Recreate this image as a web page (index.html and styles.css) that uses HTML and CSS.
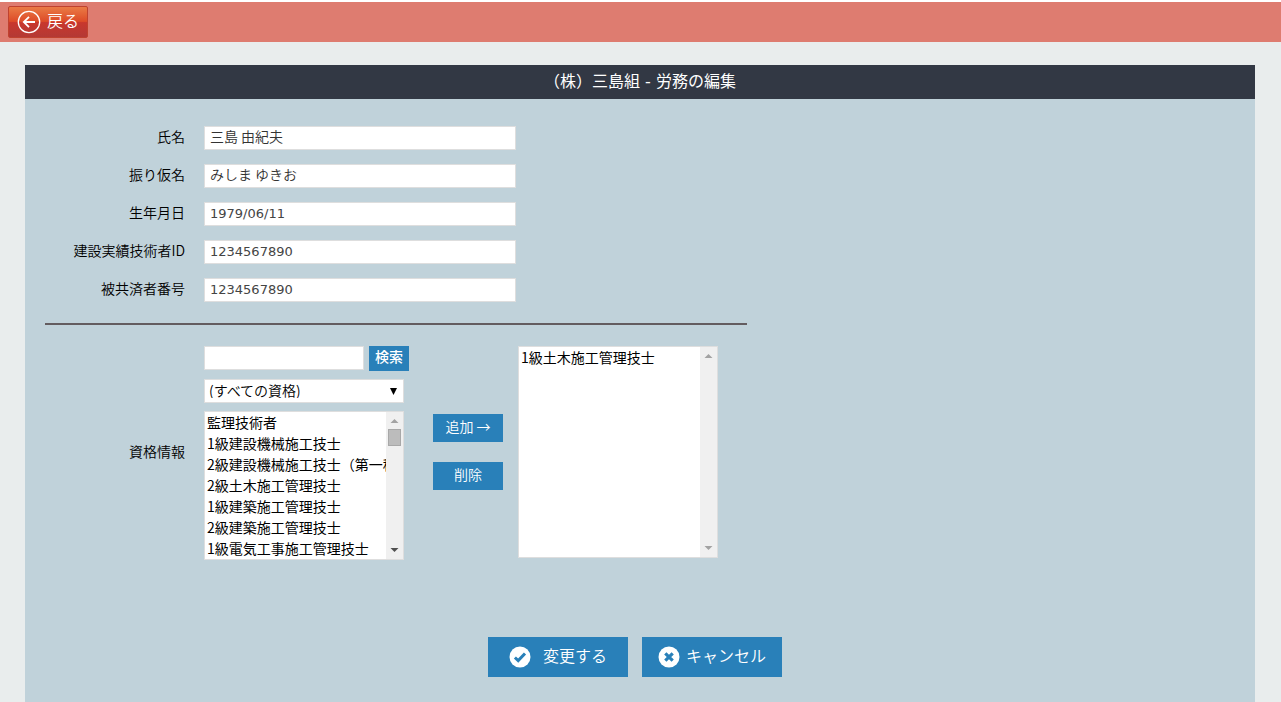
FILE: index.html
```html
<!DOCTYPE html>
<html lang="ja">
<head>
<meta charset="utf-8">
<meta name="viewport" content="width=device-width, initial-scale=1">
<title>労務の編集</title>
<link rel="stylesheet" href="styles.css">
</head>
<body>
<header class="topbar">
  <button type="button" class="back">
    <svg class="back-icon" viewBox="0 0 24 24" aria-hidden="true"><circle cx="12" cy="12" r="10.7" fill="none" stroke="#fff" stroke-width="1.3"/><path d="M18 12H7.500M12 6.800L6.800 12l5.200 5.200" fill="none" stroke="#fff" stroke-width="1.8"/></svg>
    <span>戻る</span>
  </button>
</header>
<main class="page">
  <h1 class="title">（株）三島組 - 労務の編集</h1>
  <form class="panel">
    <div class="fields">
      <div class="row"><label class="label" for="name">氏名</label><input class="box text" id="name" type="text" value="三島 由紀夫"></div>
      <div class="row"><label class="label" for="kana">振り仮名</label><input class="box text" id="kana" type="text" value="みしま ゆきお"></div>
      <div class="row"><label class="label" for="birth">生年月日</label><input class="box text number" id="birth" type="text" value="1979/06/11"></div>
      <div class="row"><label class="label" for="engineer">建設実績技術者ID</label><input class="box text number" id="engineer" type="text" value="1234567890"></div>
      <div class="row"><label class="label" for="mutual">被共済者番号</label><input class="box text number" id="mutual" type="text" value="1234567890"></div>
    </div>
    <hr class="rule">
    <div class="row license">
      <label class="label" for="available">資格情報</label>
      <div class="finder">
        <div class="search">
          <input class="box search-text" type="text" aria-label="資格の検索">
          <button type="button" class="btn search-btn">検索</button>
        </div>
        <select class="box category" aria-label="資格の種類"><option>(すべての資格)</option></select>
        <div class="list available">
          <select class="options" id="available" size="7">
            <option>監理技術者</option>
            <option>1級建設機械施工技士</option>
            <option>2級建設機械施工技士（第一種）</option>
            <option>2級土木施工管理技士</option>
            <option>1級建築施工管理技士</option>
            <option>2級建築施工管理技士</option>
            <option>1級電気工事施工管理技士</option>
            <option>2級電気工事施工管理技士</option>
            <option>1級管工事施工管理技士</option>
            <option>2級管工事施工管理技士</option>
            <option>1級造園施工管理技士</option>
            <option>2級造園施工管理技士</option>
          </select>
          <div class="scrollbar" aria-hidden="true">
            <svg class="arrow" viewBox="0 0 17 17"><path fill="#a3a3a3" d="M4.500 11h8l-4-4z"/></svg>
            <div class="thumb"></div>
            <svg class="arrow down" viewBox="0 0 17 17"><path fill="#505050" d="M4.500 6h8l-4 4z"/></svg>
          </div>
        </div>
      </div>
      <div class="transfer">
        <button type="button" class="btn move">追加 →</button>
        <button type="button" class="btn move">削除</button>
      </div>
      <div class="list chosen">
        <select class="options" size="10" aria-label="追加した資格"><option>1級土木施工管理技士</option></select>
        <div class="scrollbar" aria-hidden="true">
          <svg class="arrow" viewBox="0 0 17 17"><path fill="#a3a3a3" d="M4.500 11h8l-4-4z"/></svg>
          <svg class="arrow down" viewBox="0 0 17 17"><path fill="#a3a3a3" d="M4.500 6h8l-4 4z"/></svg>
        </div>
      </div>
    </div>
    <div class="actions">
      <button type="submit" class="btn action submit">
        <svg class="action-icon" viewBox="0 0 22 22" aria-hidden="true"><circle cx="11" cy="11" r="10.500" fill="#fff"/><path d="M5.900 11.500l3.300 3.100L16 7.500" fill="none" stroke="#2980b9" stroke-width="3"/></svg>
        <span>変更する</span>
      </button>
      <button type="button" class="btn action">
        <svg class="action-icon" viewBox="0 0 22 22" aria-hidden="true"><circle cx="11" cy="11" r="10.500" fill="#fff"/><path d="M7.300 7.300l7.400 7.400M14.700 7.300l-7.400 7.400" fill="none" stroke="#2980b9" stroke-width="3.200"/></svg>
        <span>キャンセル</span>
      </button>
    </div>
  </form>
</main>
</body>
</html>
```

FILE: styles.css
```css
* { box-sizing: border-box; }

body {
  margin: 0;
  min-height: 100vh;
  display: flex;
  flex-direction: column;
  border-top: 2px solid #fff;
  background: #e9eded;
  color: #000;
  font: 14px/20px "Noto Sans CJK JP", sans-serif;
  font-weight: 350;
}

button, input, select { margin: 0; font: inherit; border-radius: 0; }

.topbar { display: flex; align-items: center; height: 40px; padding: 0 8px; background: #de7c70; }

.back {
  display: flex;
  align-items: center;
  gap: 6px;
  width: 80px;
  height: 32px;
  padding: 0 8px;
  border: 1px solid #c0422f;
  border-radius: 2px;
  background: linear-gradient(#ea7b45 0%, #dd4b28 48%, #c8372d 52%, #b43935 100%);
  color: #fff;
  font-size: 16px;
}
.back span { white-space: nowrap; padding-bottom: 4px; }
.back-icon { width: 24px; height: 24px; flex: none; }

.page { flex: 1; display: flex; flex-direction: column; padding: 23px 26px 0 25px; }

.title {
  margin: 0;
  padding: 5px 0;
  background: #323844;
  color: #fff;
  font-family: "DejaVu Sans", "Noto Sans CJK JP", sans-serif;
  font-size: 16px;
  line-height: 24px;
  font-weight: 400;
  text-align: center;
}

.panel { flex: 1; padding: 27px 20px 25px; background: #c0d2da; }

.fields { display: flex; flex-direction: column; gap: 14px; }
.row { display: flex; align-items: center; }
.label { width: 140px; margin-right: 19px; text-align: right; line-height: 20px; padding-bottom: 4px; }

.box { height: 24px; border: 1px solid #dedede; background: #fff; color: #000; }
.text { width: 312px; padding: 0 5px 4px; color: #333; }
.number { padding-bottom: 2px; font-family: "DejaVu Sans", sans-serif; font-size: 13px; font-weight: 400; color: #444; }

.rule { width: 702px; max-width: 100%; height: 2px; margin: 21px 0; border: 0; background: #635c5f; }

.license { align-items: flex-start; }
.license .label { align-self: center; }
.finder { display: flex; flex-direction: column; gap: 8px; width: 205px; }
.search { display: flex; justify-content: space-between; height: 25px; }
.search-text { width: 160px; padding: 0 5px; }

.btn { padding: 0 0 4px; border: 0; background: #2980b9; color: #fff; }
.search-btn { width: 40px; height: 25px; padding-bottom: 6px; font-weight: 500; }

.category {
  width: 200px;
  padding: 0 4px 4px;
  appearance: none;
  background: #fff url("data:image/svg+xml,%3Csvg xmlns='http://www.w3.org/2000/svg' width='7' height='7'%3E%3Cpath d='M0 0h7L3.500 7z'/%3E%3C/svg%3E") no-repeat right 6px center;
}

.list { display: flex; width: 200px; border: 1px solid #dedede; background: #fff; }
.available { height: 149px; }
.chosen { height: 212px; }
.options { flex: 1; min-width: 0; padding: 0; border: 0; outline: 0; background: #fff; color: #000; scrollbar-width: none; }
.options option { height: 21px; min-height: 0; padding: 0 2px; }

.scrollbar { display: flex; flex-direction: column; flex: none; width: 17px; background: #f0f0f0; }
.arrow { width: 17px; height: 17px; }
.down { margin-top: auto; }
.thumb { height: 17px; margin: 0 2px; border: 1px solid #a8a8a8; background: #bcbcbc; }

.transfer { display: flex; flex-direction: column; gap: 20px; align-self: center; margin: 0 15px 2px 24px; }
.move { width: 70px; height: 28px; }

.actions { display: flex; justify-content: center; gap: 14px; margin-top: 77px; padding-right: 10px; }
.action { display: flex; align-items: center; justify-content: center; gap: 6px; width: 140px; height: 40px; padding: 0; font-size: 16px; white-space: nowrap; }
.action span { padding-bottom: 4px; }
.submit { gap: 12px; }
.action-icon { width: 22px; height: 22px; flex: none; }
```
